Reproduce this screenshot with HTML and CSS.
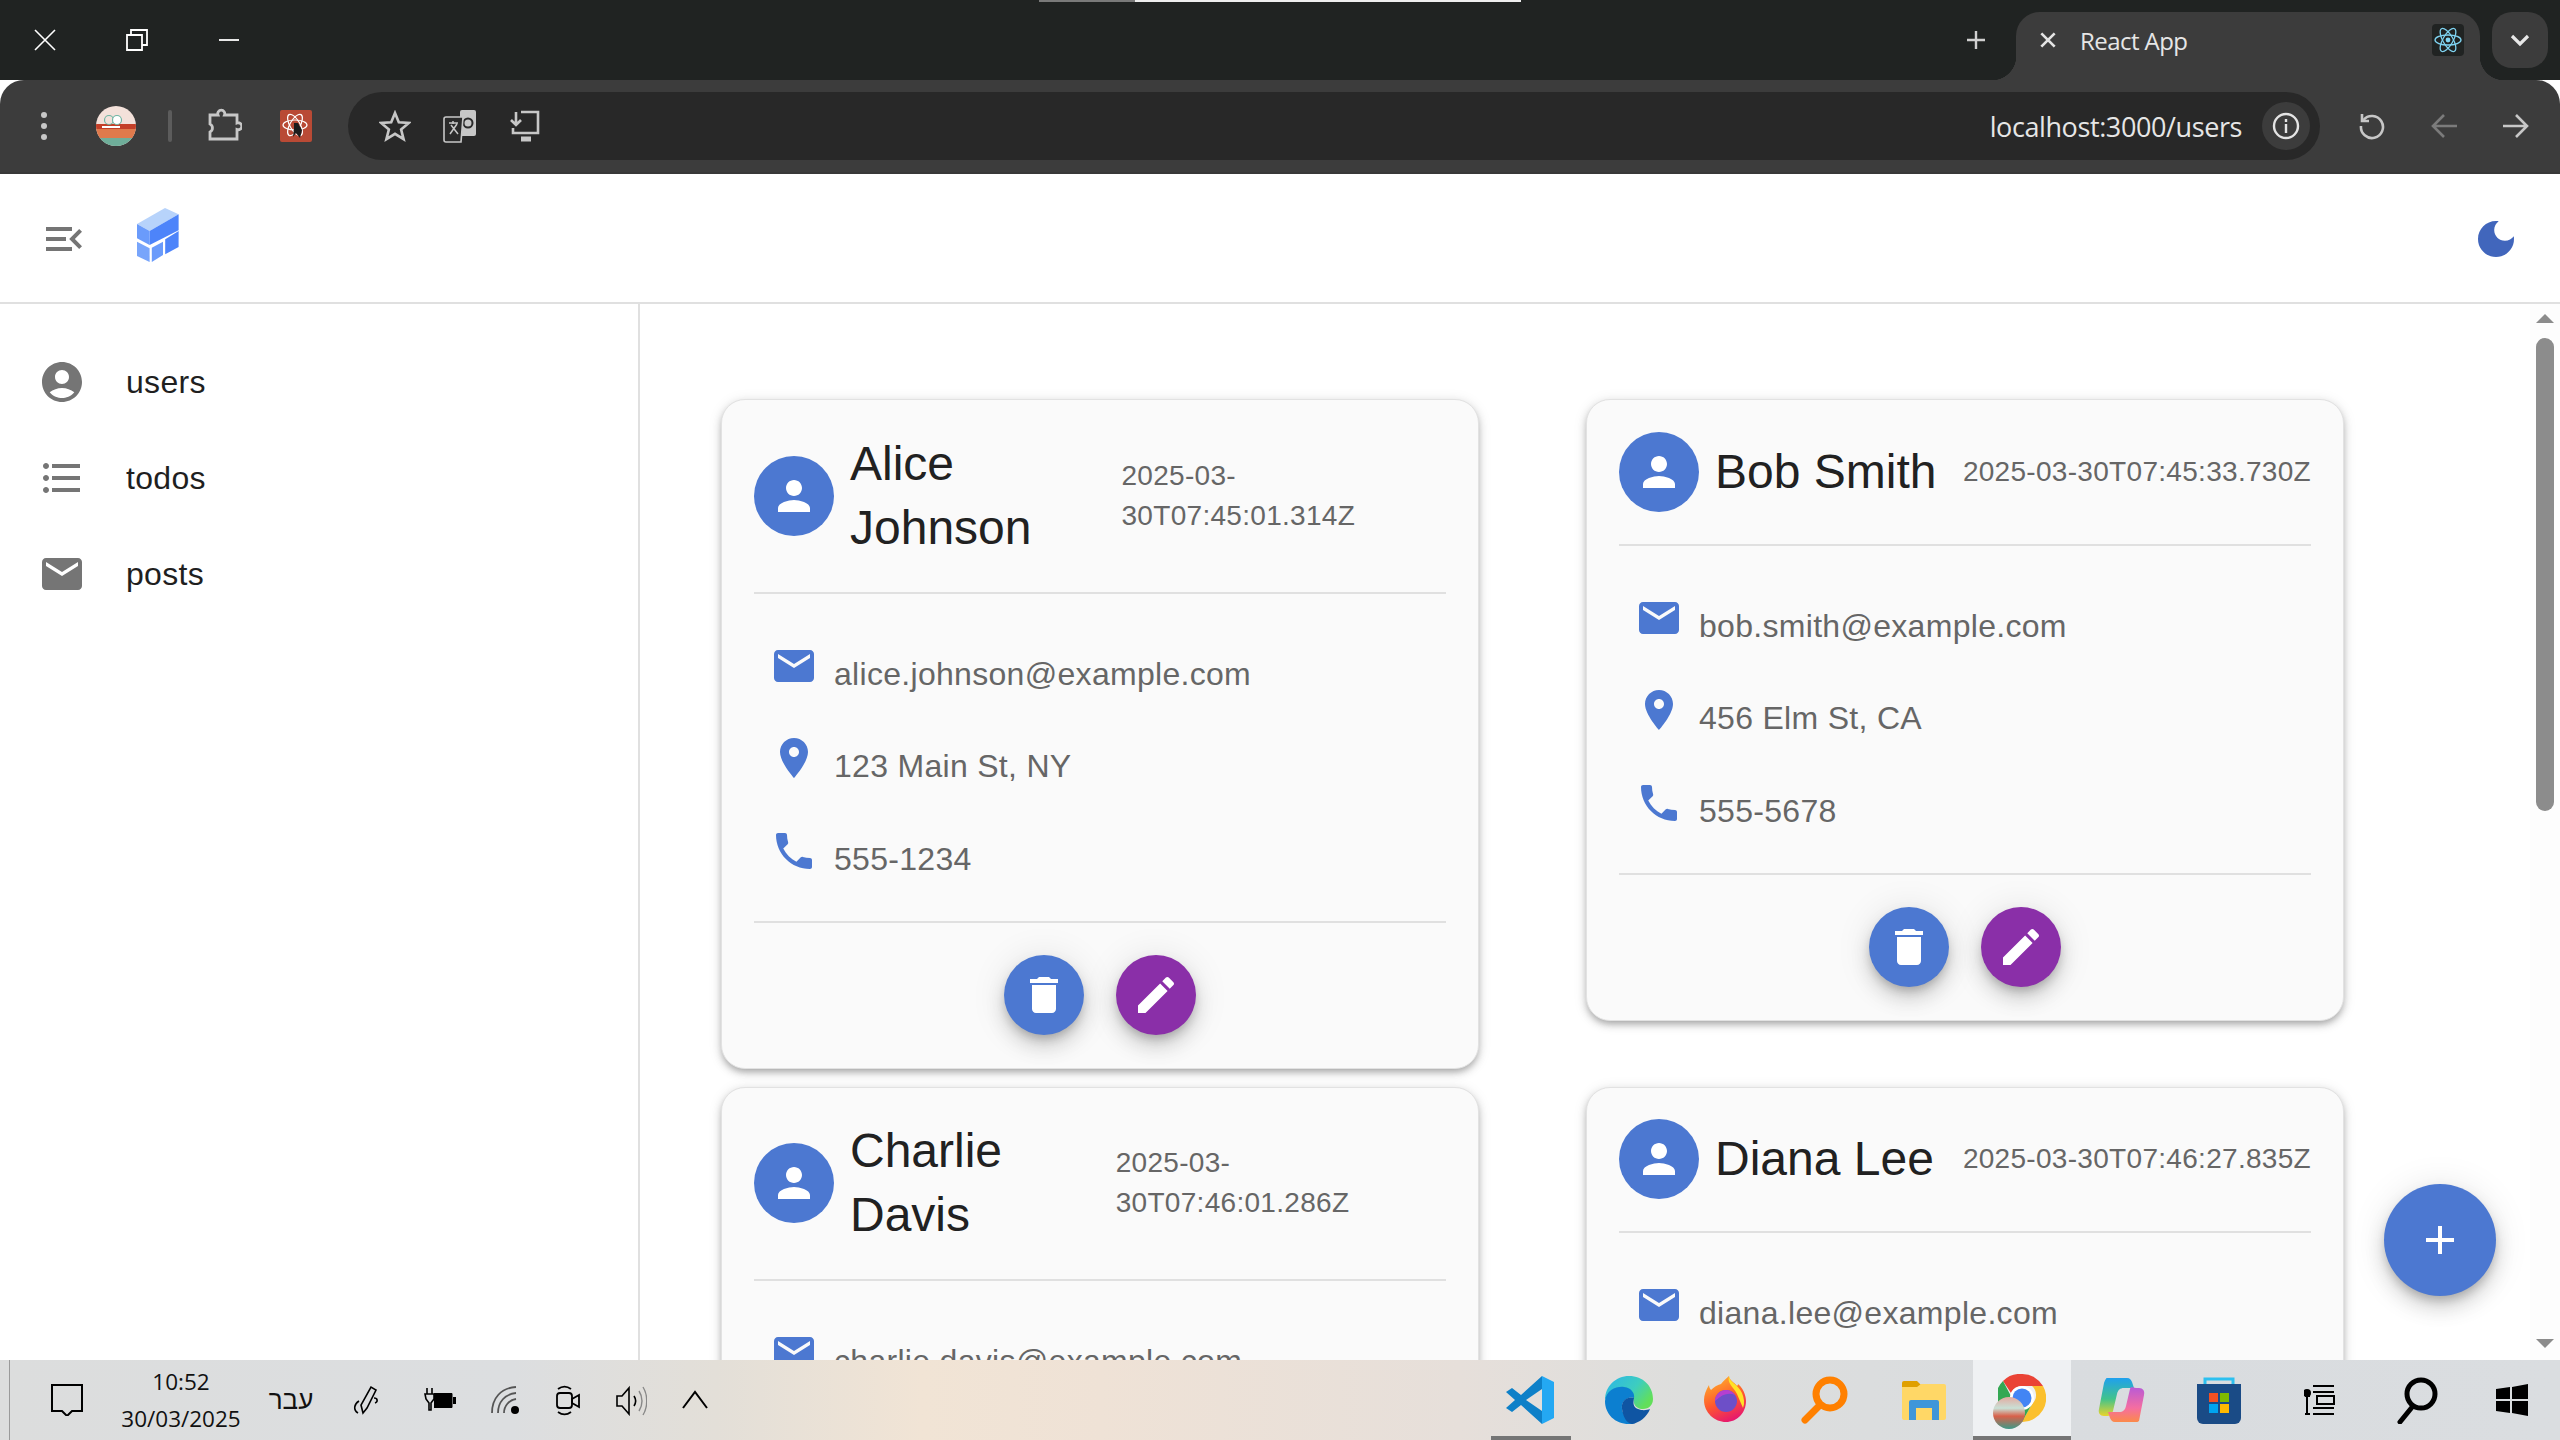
FILE: index.html
```html
<!DOCTYPE html>
<html lang="en">
<head>
    <meta charset="UTF-8">
    <title>React App</title>
    <link rel="stylesheet" href="styles.css">
</head>
<body>
    <svg class="defs" xmlns="http://www.w3.org/2000/svg">
        <symbol id="i-person" viewBox="0 0 24 24"><path d="M12 12c2.21 0 4-1.79 4-4s-1.79-4-4-4-4 1.79-4 4 1.79 4 4 4zm0 2c-2.67 0-8 1.34-8 4v2h16v-2c0-2.66-5.33-4-8-4z"/></symbol>
        <symbol id="i-email" viewBox="0 0 24 24"><path d="M20 4H4c-1.1 0-1.99.9-1.99 2L2 18c0 1.1.9 2 2 2h16c1.1 0 2-.9 2-2V6c0-1.1-.9-2-2-2zm0 4l-8 5-8-5V6l8 5 8-5v2z"/></symbol>
        <symbol id="i-pin" viewBox="0 0 24 24"><path d="M12 2C8.13 2 5 5.13 5 9c0 5.25 7 13 7 13s7-7.75 7-13c0-3.87-3.13-7-7-7zm0 9.5c-1.38 0-2.5-1.12-2.5-2.5s1.12-2.5 2.5-2.5 2.5 1.12 2.5 2.5-1.12 2.5-2.5 2.5z"/></symbol>
        <symbol id="i-phone" viewBox="0 0 24 24"><path d="M6.62 10.79c1.44 2.83 3.76 5.14 6.59 6.59l2.2-2.2c.27-.27.67-.36 1.02-.24 1.12.37 2.33.57 3.57.57.55 0 1 .45 1 1V20c0 .55-.45 1-1 1-9.39 0-17-7.61-17-17 0-.55.45-1 1-1h3.5c.55 0 1 .45 1 1 0 1.25.2 2.45.57 3.57.11.35.03.74-.25 1.02l-2.2 2.2z"/></symbol>
        <symbol id="i-delete" viewBox="0 0 24 24"><path d="M6 19c0 1.1.9 2 2 2h8c1.1 0 2-.9 2-2V7H6v12zM19 4h-3.5l-1-1h-5l-1 1H5v2h14V4z"/></symbol>
        <symbol id="i-edit" viewBox="0 0 24 24"><path d="M3 17.25V21h3.75L17.81 9.94l-3.75-3.75L3 17.25zM20.71 7.04c.39-.39.39-1.02 0-1.41l-2.34-2.34c-.39-.39-1.02-.39-1.41 0l-1.83 1.83 3.75 3.75 1.83-1.83z"/></symbol>
    </svg>

    <!-- browser tabs -->
    <div class="tabstrip">
        <div class="winbtn">
            <svg viewBox="0 0 24 24" class="win-ic"><path d="M2 2l20 20M22 2L2 22" stroke="#fff" stroke-width="1.6" fill="none"/></svg>
        </div>
        <div class="winbtn">
            <svg viewBox="0 0 24 24" class="win-ic"><path d="M2 7h15v15H2zM6 7V2h16v15h-5" stroke="#fff" stroke-width="1.8" fill="none"/></svg>
        </div>
        <div class="winbtn">
            <svg viewBox="0 0 24 24" class="win-ic"><path d="M2 12h20" stroke="#fff" stroke-width="1.8" fill="none"/></svg>
        </div>
        <div class="progress"><span class="progress-old"></span><span class="progress-new"></span></div>
        <div class="newtab">
            <svg viewBox="0 0 24 24" class="tab-ic"><path d="M12 3v18M3 12h18" stroke="#d0d0d0" stroke-width="2.4" fill="none"/></svg>
        </div>
        <div class="tab">
            <svg viewBox="0 0 24 24" class="tab-close"><path d="M4 4l16 16M20 4L4 20" stroke="#e4e4e4" stroke-width="3.2" fill="none"/></svg>
            <span class="tab-title">React App</span>
            <span class="favicon">
                <svg viewBox="0 0 32 32" width="32" height="32" fill="none" stroke="#7fd4f2" stroke-width="1.3">
                    <ellipse cx="16" cy="16" rx="13" ry="5"/>
                    <ellipse cx="16" cy="16" rx="13" ry="5" transform="rotate(60 16 16)"/>
                    <ellipse cx="16" cy="16" rx="13" ry="5" transform="rotate(120 16 16)"/>
                    <circle cx="16" cy="16" r="2.4" fill="#7fd4f2" stroke="none"/>
                </svg>
            </span>
        </div>
        <div class="tabmenu">
            <svg viewBox="0 0 24 24" class="tab-ic"><path d="M4 8l8 8 8-8" stroke="#e8e8e8" stroke-width="3.2" fill="none"/></svg>
        </div>
    </div>

    <!-- browser toolbar -->
    <div class="toolbar">
        <div class="tool">
            <svg viewBox="0 0 48 48" class="tool-ic"><circle cx="24" cy="13" r="3" fill="#c7c7c7"/><circle cx="24" cy="24" r="3" fill="#c7c7c7"/><circle cx="24" cy="35" r="3" fill="#c7c7c7"/></svg>
        </div>
        <div class="tool">
            <svg viewBox="0 0 40 40" width="40" height="40">
                <clipPath id="profile"><circle cx="20" cy="20" r="20"/></clipPath>
                <g clip-path="url(#profile)">
                    <rect width="40" height="40" fill="#f3e1da"/>
                    <rect y="18" width="40" height="5" fill="#c43f28"/>
                    <rect y="23" width="40" height="9" fill="#df7a4c"/>
                    <rect y="32" width="40" height="8" fill="#6fae9a"/>
                    <rect x="6" y="20" width="18" height="2" fill="#fff"/>
                    <circle cx="13" cy="14" r="4.5" fill="none" stroke="#6fb5a4" stroke-width="1.2"/>
                    <circle cx="21" cy="14" r="4.5" fill="#fff" stroke="#6fb5a4" stroke-width="1.2"/>
                </g>
            </svg>
        </div>
        <span class="tool-sep"></span>
        <div class="tool">
            <svg viewBox="0 0 36 36" width="36" height="36" fill="none" stroke="#c7c7c7" stroke-width="2.8"><path d="M4 7h8a3.5 3.5 0 1 1 6.5 0H31v8a3.5 3.5 0 1 1 0 6.5V31H4v-7a4.5 4.5 0 0 0 0-8z"/></svg>
        </div>
        <div class="tool">
            <svg viewBox="0 0 32 32" width="32" height="32">
                <rect width="32" height="32" rx="2" fill="#b94a35"/>
                <g fill="none" stroke="#fff" stroke-width="1.2">
                    <ellipse cx="15" cy="15" rx="12" ry="5"/>
                    <ellipse cx="15" cy="15" rx="12" ry="5" transform="rotate(60 15 15)"/>
                    <ellipse cx="15" cy="15" rx="12" ry="5" transform="rotate(120 15 15)"/>
                </g>
                <path d="M14 13h4l4 7-2 8-4-5-3 4 1-8z" fill="#1c1c1c"/>
            </svg>
        </div>
        <div class="omnibox">
            <div class="omni-actions">
                <div class="tool">
                    <svg viewBox="0 0 32 32" width="32" height="32"><path d="M16 3l3.8 9.3 10 .7-7.7 6.4 2.5 9.7L16 23.8l-8.6 5.3 2.5-9.7L2.2 13l10-.7z" fill="none" stroke="#c7c7c7" stroke-width="2.6"/></svg>
                </div>
                <div class="tool">
                    <svg viewBox="0 0 34 34" width="34" height="34">
                        <path d="M17 8V3a2 2 0 0 1 2-2h12a2 2 0 0 1 2 2v22a2 2 0 0 1-2 2H17z" fill="#c7c7c7"/>
                        <circle cx="25" cy="14" r="4.5" fill="none" stroke="#2a2a2a" stroke-width="2"/>
                        <path d="M3 8h17l-2 25H3a2 2 0 0 1-2-2V10a2 2 0 0 1 2-2z" fill="#2a2a2a" stroke="#c7c7c7" stroke-width="1.6"/>
                        <path d="M6 14h9M10 12v3M14 15l-7 10M8 16l7 9" fill="none" stroke="#c7c7c7" stroke-width="1.5"/>
                    </svg>
                </div>
                <div class="tool">
                    <svg viewBox="0 0 32 32" width="32" height="32" fill="none" stroke="#c7c7c7" stroke-width="2.6"><path d="M12 2h17v21H4v-5"/><path d="M7 2v13M2 10l5 5 5-5"/><path d="M12 29h10" stroke-width="5"/></svg>
                </div>
            </div>
            <span class="url">localhost:3000/users</span>
            <div class="site-info">
                <svg viewBox="0 0 28 28" width="28" height="28" fill="none" stroke="#e4e4e4" stroke-width="2.4"><circle cx="14" cy="14" r="12"/><path d="M14 12v9M14 7v3"/></svg>
            </div>
        </div>
        <div class="nav-tools">
            <div class="tool">
                <svg viewBox="0 0 28 28" width="28" height="28" fill="none" stroke="#c7c7c7" stroke-width="2.6"><path d="M5.5 8A11 11 0 1 1 3 14"/><path d="M4 2v7h7"/></svg>
            </div>
            <div class="tool">
                <svg viewBox="0 0 28 28" width="28" height="28" fill="none" stroke="#7b7b7b" stroke-width="2.6"><path d="M27 14H3M14 3L3 14l11 11"/></svg>
            </div>
            <div class="tool">
                <svg viewBox="0 0 28 28" width="28" height="28" fill="none" stroke="#c7c7c7" stroke-width="2.6"><path d="M1 14h24M14 3l11 11-11 11"/></svg>
            </div>
        </div>
    </div>

    <!-- app bar -->
    <header class="appbar">
        <svg viewBox="0 0 24 24" class="icon menu-ic"><path d="M3 18h13v-2H3v2zm0-5h10v-2H3v2zm0-7v2h13V6H3zm18 9.59L17.42 12 21 8.41 19.59 7l-5 5 5 5L21 15.59z"/></svg>
        <svg viewBox="0 0 42 54" class="logo">
            <path d="M0 16L28 0l13.6 6.3L12.6 23z" fill="#b7d3fb"/>
            <path d="M0 16l12.6 7v14L0 30.3z" fill="#6a9bfb"/>
            <path d="M12.6 23l29-16.7v16L12.6 37z" fill="#4d84fa"/>
            <path d="M0 33.7l12.6 6.6V54L0 48z" fill="#78a5fb"/>
            <path d="M14.8 39.7L26 33.7V47l-11.2 7z" fill="#6a9bfb"/>
            <path d="M28.2 31.3L41.6 23v16l-13.4 7.3z" fill="#4d84fa"/>
        </svg>
        <svg viewBox="0 0 24 24" class="icon moon-ic"><path d="M12 3c-4.97 0-9 4.03-9 9s4.03 9 9 9 9-4.03 9-9c0-.46-.04-.92-.1-1.36-.98 1.37-2.58 2.26-4.4 2.26-2.98 0-5.4-2.42-5.4-5.4 0-1.81.89-3.42 2.26-4.4-.44-.06-.9-.1-1.36-.1z"/></svg>
    </header>

    <div class="page">
        <nav class="sidebar">
            <a class="nav-item">
                <svg viewBox="0 0 24 24" class="icon"><path d="M12 2C6.48 2 2 6.48 2 12s4.48 10 10 10 10-4.48 10-10S17.52 2 12 2zm0 4c1.93 0 3.5 1.57 3.5 3.5S13.93 13 12 13s-3.5-1.57-3.5-3.5S10.07 6 12 6zm0 14c-2.03 0-4.43-.82-6.14-2.88C7.55 15.8 9.68 15 12 15s4.45.8 6.14 2.12C16.43 19.18 14.03 20 12 20z"/></svg>
                <span>users</span>
            </a>
            <a class="nav-item">
                <svg viewBox="0 0 24 24" class="icon"><path d="M4 10.5c-.83 0-1.5.67-1.5 1.5s.67 1.5 1.5 1.5 1.5-.67 1.5-1.5-.67-1.5-1.5-1.5zm0-6c-.83 0-1.5.67-1.5 1.5S3.17 7.5 4 7.5 5.5 6.83 5.5 6 4.83 4.5 4 4.5zm0 12c-.83 0-1.5.68-1.5 1.5s.68 1.5 1.5 1.5 1.5-.68 1.5-1.5-.67-1.5-1.5-1.5zM7 19h14v-2H7v2zm0-6h14v-2H7v2zm0-8v2h14V5H7z"/></svg>
                <span>todos</span>
            </a>
            <a class="nav-item">
                <svg class="icon"><use href="#i-email"/></svg>
                <span>posts</span>
            </a>
        </nav>

        <main class="content">
            <div class="cards">
                <article class="card">
                    <div class="card-head">
                        <span class="avatar"><svg class="icon"><use href="#i-person"/></svg></span>
                        <h2 class="name">Alice Johnson</h2>
                        <span class="date">2025-03-30T07:45:01.314Z</span>
                    </div>
                    <ul class="info">
                        <li><svg class="icon"><use href="#i-email"/></svg><span>alice.johnson@example.com</span></li>
                        <li><svg class="icon"><use href="#i-pin"/></svg><span>123 Main St, NY</span></li>
                        <li><svg class="icon"><use href="#i-phone"/></svg><span>555-1234</span></li>
                    </ul>
                    <div class="card-actions">
                        <button class="round blue"><svg class="icon"><use href="#i-delete"/></svg></button>
                        <button class="round purple"><svg class="icon"><use href="#i-edit"/></svg></button>
                    </div>
                </article>

                <article class="card">
                    <div class="card-head">
                        <span class="avatar"><svg class="icon"><use href="#i-person"/></svg></span>
                        <h2 class="name">Bob Smith</h2>
                        <span class="date">2025-03-30T07:45:33.730Z</span>
                    </div>
                    <ul class="info">
                        <li><svg class="icon"><use href="#i-email"/></svg><span>bob.smith@example.com</span></li>
                        <li><svg class="icon"><use href="#i-pin"/></svg><span>456 Elm St, CA</span></li>
                        <li><svg class="icon"><use href="#i-phone"/></svg><span>555-5678</span></li>
                    </ul>
                    <div class="card-actions">
                        <button class="round blue"><svg class="icon"><use href="#i-delete"/></svg></button>
                        <button class="round purple"><svg class="icon"><use href="#i-edit"/></svg></button>
                    </div>
                </article>

                <article class="card">
                    <div class="card-head">
                        <span class="avatar"><svg class="icon"><use href="#i-person"/></svg></span>
                        <h2 class="name">Charlie Davis</h2>
                        <span class="date">2025-03-30T07:46:01.286Z</span>
                    </div>
                    <ul class="info">
                        <li><svg class="icon"><use href="#i-email"/></svg><span>charlie.davis@example.com</span></li>
                    </ul>
                </article>

                <article class="card">
                    <div class="card-head">
                        <span class="avatar"><svg class="icon"><use href="#i-person"/></svg></span>
                        <h2 class="name">Diana Lee</h2>
                        <span class="date">2025-03-30T07:46:27.835Z</span>
                    </div>
                    <ul class="info">
                        <li><svg class="icon"><use href="#i-email"/></svg><span>diana.lee@example.com</span></li>
                    </ul>
                </article>
            </div>

            <button class="fab">
                <svg viewBox="0 0 24 24" class="icon"><path d="M19 13h-6v6h-2v-6H5v-2h6V5h2v6h6v2z"/></svg>
            </button>
        </main>

        <div class="scrollbar">
            <span class="arrow-up"></span>
            <span class="thumb"></span>
            <span class="arrow-down"></span>
        </div>
    </div>

    <!-- windows taskbar -->
    <footer class="taskbar">
        <div class="tray">
            <svg viewBox="0 0 32 32" class="tray-ic big"><path d="M1 1h30v26H21l-5 5-5-5H1z" fill="none" stroke="#000" stroke-width="2"/></svg>
            <div class="clock"><span>10:52</span><span>30/03/2025</span></div>
            <span class="lang" lang="he">עבר</span>
            <svg viewBox="0 0 32 32" class="tray-ic"><path d="M12 29l-2-8L20 3l5 3-9 18zM23 14c4 0 4 4 1 5M8 17c-5 3-6 9-1 12" fill="none" stroke="#000" stroke-width="1.6"/></svg>
            <svg viewBox="0 0 32 32" class="tray-ic"><path d="M3 4v6M8 4v6M1 10h9v5l-3 4v7H5v-7l-3-4z" fill="none" stroke="#000" stroke-width="1.6"/><rect x="10" y="9" width="18" height="15" fill="#000"/><rect x="21" y="10" width="7" height="13" fill="none" stroke="#000"/><rect x="29" y="13" width="3" height="7"/></svg>
            <svg viewBox="0 0 32 32" class="tray-ic"><path d="M3 29C3 14 12 4 27 3M9 29C9 18 16 10 27 9M15 29c0-7 5-13 12-14" fill="none" stroke="#555" stroke-width="1.8"/><circle cx="26" cy="26" r="4"/></svg>
            <svg viewBox="0 0 32 32" class="tray-ic"><rect x="6" y="9" width="15" height="15" rx="3" fill="none" stroke="#000" stroke-width="1.8"/><path d="M21 15l7-4v12l-7-4zM7 5c4-3 9-3 13 0M7 28c4 3 9 3 13 0" fill="none" stroke="#000" stroke-width="1.8"/></svg>
            <svg viewBox="0 0 32 32" class="tray-ic"><path d="M2 12h5l7-8v26l-7-8H2z" fill="none" stroke="#000" stroke-width="1.6"/><path d="M19 12c2 3 2 7 0 10" fill="none" stroke="#000" stroke-width="1.6"/><path d="M24 7c4 6 4 14 0 20M28 3c5 8 5 20 0 28" fill="none" stroke="#888" stroke-width="1.4"/></svg>
            <svg viewBox="0 0 32 32" class="tray-ic"><path d="M4 24L16 8l12 16" fill="none" stroke="#000" stroke-width="2"/></svg>
        </div>

        <div class="apps">
            <div class="app active-soft">
                <svg viewBox="0 0 48 48" class="app-ic">
                    <path d="M36 0L15 19 6 12l-6 4 9 8-9 8 6 4 9-7 21 19V35L20 24 36 13z" fill="#0e80c8"/>
                    <path d="M36 0l12 6v36l-12 6z" fill="#24a8f3"/>
                </svg>
            </div>
            <div class="app">
                <svg viewBox="0 0 48 48" class="app-ic">
                    <defs><linearGradient id="edge" x1="0" y1="0" x2="1" y2="0.6"><stop offset="0" stop-color="#2bb5e8"/><stop offset=".6" stop-color="#3dcdc0"/><stop offset="1" stop-color="#62df5a"/></linearGradient></defs>
                    <path d="M0 24C0 10 11 0 24 0c14 0 24 10 24 23 0 6-4 10-10 10-4 0-8-2-9-6-1-4 0-6-2-9-4-5-12-5-17-2C5 18 1 21 0 24z" fill="url(#edge)"/>
                    <path d="M0 25C1 14 12 10 19 11c8 1 11 7 10 11-7-2-13 4-12 11 1 8 9 13 13 14-2 1-4 1-6 1C10 48 0 38 0 25z" fill="#0c7fd0"/>
                    <path d="M17 33c-1-7 4-13 12-11-1 5-1 9 4 11 5 2 9 1 12 0-3 8-11 14-18 15-6-1-9-8-10-15z" fill="#0f55a3"/>
                </svg>
            </div>
            <div class="app">
                <svg viewBox="0 0 48 48" class="app-ic">
                    <defs><linearGradient id="fox" x1="0.2" y1="0" x2="0.6" y2="1"><stop offset="0" stop-color="#ffb52b"/><stop offset=".55" stop-color="#ff5a2c"/><stop offset="1" stop-color="#e6176f"/></linearGradient></defs>
                    <path d="M26 0c0 4 5 6 8 10 1-1 1-2 1-2 7 6 8 14 8 17 0 12-9 21-20 21S1 37 1 24C1 19 3 14 6 9c0 2 1 4 2 5 3-3 6-5 10-6 2-3 5-5 8-8z" fill="url(#fox)"/>
                    <path d="M26 0c0 6 9 8 13 17 2 5 3 10 1 15l-6-14C30 10 24 8 26 0z" fill="#ffe226"/>
                    <circle cx="23" cy="25" r="11" fill="#6d4fc8"/>
                    <path d="M12 25c0-6 5-11 11-11 4 0 7 2 9 5-6-3-13-1-20 6z" fill="#b43fd0"/>
                </svg>
            </div>
            <div class="app">
                <svg viewBox="0 0 48 48" class="app-ic">
                    <circle cx="29" cy="18" r="14" fill="none" stroke="#ff8000" stroke-width="7"/>
                    <path d="M19 29L4 44" stroke="#ff8000" stroke-width="7" stroke-linecap="round"/>
                </svg>
            </div>
            <div class="app">
                <svg viewBox="0 0 48 48" class="app-ic">
                    <path d="M2 7a2 2 0 0 1 2-2h13l4 4-4 4H2z" fill="#e0a000"/>
                    <path d="M2 11h15l4-3h23a2 2 0 0 1 2 2v32a2 2 0 0 1-2 2H4a2 2 0 0 1-2-2z" fill="#ffd766"/>
                    <path d="M9 44V26a2 2 0 0 1 2-2h26a2 2 0 0 1 2 2v18h-7V32H16v12z" fill="#3f96d9"/>
                </svg>
            </div>
            <div class="app active">
                <svg viewBox="0 0 48 48" class="app-ic">
                    <path d="M24 0a24 24 0 0 1 21 12H24a12 12 0 0 0-11 7L5 7A24 24 0 0 1 24 0z" fill="#ea4335"/>
                    <path d="M45 12a24 24 0 0 1-21 36l10-18a12 12 0 0 0 0-18z" fill="#fbc02d"/>
                    <path d="M5 7l9 17a12 12 0 0 0 20 6l-10 18A24 24 0 0 1 5 7z" fill="#34a853"/>
                    <circle cx="24" cy="24" r="12" fill="#fff"/>
                    <circle cx="24" cy="24" r="9.5" fill="#4285f4"/>
                </svg>
                <span class="chrome-profile"></span>
            </div>
            <div class="app">
                <svg viewBox="0 0 48 48" class="app-ic">
                    <defs>
                        <linearGradient id="cop1" x1="0" y1="0" x2="0" y2="1"><stop offset="0" stop-color="#1fa0ee"/><stop offset=".55" stop-color="#41c38c"/><stop offset="1" stop-color="#e9d42c"/></linearGradient>
                        <linearGradient id="cop2" x1="0.5" y1="0" x2="0.5" y2="1"><stop offset="0" stop-color="#b95ad6"/><stop offset=".6" stop-color="#f56ea0"/><stop offset="1" stop-color="#fb8a4a"/></linearGradient>
                    </defs>
                    <path d="M10 2h20c3 0 4 2 5 4l2 6H27c-4 0-6 2-7 6l-4 17c-1 3-3 5-6 5H7c-4 0-6-3-5-7l5-26c1-3 2-5 3-5z" fill="url(#cop1)"/>
                    <path d="M38 46H18c-3 0-4-2-5-4l-2-6h11c4 0 6-2 7-6l4-17c1-3 3-1 6-1h3c4 0 6 3 5 7l-5 26c-1 1-2 1-4 1z" fill="url(#cop2)"/>
                </svg>
            </div>
            <div class="app">
                <svg viewBox="0 0 48 48" class="app-ic">
                    <path d="M10 10V3h28v7" fill="none" stroke="#2cc0f0" stroke-width="3"/>
                    <path d="M2 8h44v34a6 6 0 0 1-6 6H8a6 6 0 0 1-6-6z" fill="#1a4b86"/>
                    <rect x="14" y="17" width="9" height="9" fill="#f25022"/>
                    <rect x="25" y="17" width="9" height="9" fill="#7fba00"/>
                    <rect x="14" y="28" width="9" height="9" fill="#00a4ef"/>
                    <rect x="25" y="28" width="9" height="9" fill="#ffb900"/>
                </svg>
            </div>
        </div>

        <div class="sys-apps">
            <div class="app">
                <svg viewBox="0 0 32 32" width="32" height="32" fill="none" stroke="#000" stroke-width="2"><path d="M9 2h21M9 8h21M9 24h21M9 30h21M13 12h17v8H13zM1 12h5M3 12v18M1 30h5"/><circle cx="3" cy="9" r="3" fill="#000"/></svg>
            </div>
            <div class="app">
                <svg viewBox="0 0 48 48" class="app-ic">
                    <circle cx="29" cy="18" r="14" fill="none" stroke="#000" stroke-width="5"/>
                    <path d="M21 30L8 46" stroke="#000" stroke-width="5" stroke-linecap="round"/>
                </svg>
            </div>
            <div class="app">
                <svg viewBox="0 0 32 32" width="32" height="32"><path d="M0 5l14-2v12H0zM16 3l16-3v15H16zM0 17h14v12L0 27zM16 17h16v15l-16-3z"/></svg>
            </div>
        </div>
    </footer>
</body>
</html>
```

FILE: styles.css
```css
* {
    box-sizing: border-box;
}
html, body {
    margin: 0;
    padding: 0;
}
body {
    width: 2560px;
    height: 1440px;
    overflow: hidden;
    display: flex;
    flex-direction: column;
    background-color: #fff;
    font-family: "Liberation Sans", Arial, sans-serif;
}
.defs {
    display: none;
}
.icon {
    width: 48px;
    height: 48px;
    flex: none;
    fill: currentColor;
}

/* browser tabs */
.tabstrip {
    position: relative;
    flex: none;
    height: 80px;
    display: flex;
    padding-right: 12px;
    background-color: #202322;
}
.winbtn {
    width: 92px;
    height: 80px;
    display: flex;
    align-items: center;
    justify-content: center;
}
.winbtn:first-child {
    margin-left: -1px;
}
.win-ic {
    width: 24px;
    height: 24px;
}
.progress {
    position: absolute;
    top: 0;
    left: 1039px;
    display: flex;
    height: 2px;
}
.progress-old {
    width: 96px;
    background-color: #7a7a7a;
}
.progress-new {
    width: 386px;
    background-color: #eee;
}
.newtab {
    margin-left: auto;
    width: 56px;
    height: 80px;
    margin-right: 12px;
    display: flex;
    align-items: center;
    justify-content: center;
}
.tab-ic {
    width: 24px;
    height: 24px;
}
.tab {
    position: relative;
    width: 464px;
    height: 68px;
    margin-top: 12px;
    padding: 0 16px 12px 22px;
    display: flex;
    align-items: center;
    border-radius: 24px 24px 0 0;
    background-color: #3c3c3c;
}
.tab::before,
.tab::after {
    content: "";
    position: absolute;
    bottom: 0;
    width: 24px;
    height: 24px;
}
.tab::before {
    left: -24px;
    background: radial-gradient(circle at 0 0, transparent 24px, #3c3c3c 24.5px);
}
.tab::after {
    right: -24px;
    background: radial-gradient(circle at 100% 0, transparent 24px, #3c3c3c 24.5px);
}
.tab-close {
    width: 20px;
    height: 20px;
    flex: none;
}
.tab-title {
    margin-left: 22px;
    color: #e6e6e6;
    font: 24px "Open Sans", sans-serif;
    letter-spacing: -0.55px;
}
.favicon {
    margin-left: auto;
    width: 32px;
    height: 32px;
    border-radius: 4px;
    background-color: #202322;
}
.tabmenu {
    width: 56px;
    height: 56px;
    margin: 12px 0 0 12px;
    display: flex;
    align-items: center;
    justify-content: center;
    border-radius: 20px;
    background-color: #3c3c3c;
}

/* browser toolbar */
.toolbar {
    position: relative;
    flex: none;
    height: 94px;
    padding: 0 20px;
    display: flex;
    align-items: center;
    gap: 24px;
    border-radius: 24px 24px 0 0;
    border-bottom: 2px solid #383838;
    background-color: #3c3c3c;
}
.tool {
    width: 48px;
    height: 48px;
    flex: none;
    display: flex;
    align-items: center;
    justify-content: center;
}
.tool-ic {
    width: 48px;
    height: 48px;
}
.tool-sep {
    width: 4px;
    height: 32px;
    margin: 0 4px;
    border-radius: 2px;
    background-color: #5c5c5c;
}
.omnibox {
    width: 1972px;
    height: 68px;
    margin-left: 4px;
    padding: 0 10px 0 23px;
    display: flex;
    align-items: center;
    border-radius: 34px;
    background-color: #282828;
}
.omni-actions {
    display: flex;
    gap: 17px;
}
.url {
    margin-left: auto;
    color: #e6e6e6;
    font: 27px "Open Sans", sans-serif;
    letter-spacing: -0.4px;
}
.site-info {
    width: 48px;
    height: 48px;
    margin-left: 20px;
    display: flex;
    align-items: center;
    justify-content: center;
    border-radius: 50%;
    background-color: #3c3c3c;
}
.nav-tools {
    margin-left: 4px;
    display: flex;
    gap: 24px;
}

/* app bar */
.appbar {
    flex: none;
    height: 130px;
    padding: 1px 40px 0;
    display: flex;
    align-items: center;
    border-bottom: 2px solid #e0e0e0;
}
.menu-ic {
    color: #757575;
}
.logo {
    width: 42px;
    height: 54px;
    margin: 0 0 8px 49px;
}
.moon-ic {
    margin-left: auto;
    color: #4166bc;
}

/* page */
.page {
    flex: 1;
    min-height: 0;
    display: flex;
}
.sidebar {
    flex: none;
    width: 640px;
    padding-top: 30px;
    border-right: 2px solid #e0e0e0;
}
.nav-item {
    height: 96px;
    padding-left: 38px;
    display: flex;
    align-items: center;
    gap: 40px;
    color: #1f1f1f;
    font-size: 32px;
    letter-spacing: 0.3px;
}
.nav-item .icon {
    color: #757575;
}
.content {
    position: relative;
    flex: 1;
    min-width: 0;
    overflow: hidden;
}
.cards {
    padding: 95px 0 0 81px;
    display: grid;
    grid-template-columns: 758px 758px;
    column-gap: 107px;
    row-gap: 18px;
    align-items: start;
}
.card {
    padding: 31.5px 32px 33px;
    border: 1px solid #e2e2e2;
    border-radius: 24px;
    background-color: #fafafa;
    box-shadow: 0 4px 6px -2px rgba(0, 0, 0, 0.2), 0 4px 8px rgba(0, 0, 0, 0.14), 0 2px 14px rgba(0, 0, 0, 0.1);
}
.card-head {
    padding-bottom: 32px;
    display: flex;
    align-items: center;
    justify-content: space-between;
    border-bottom: 2px solid #e0e0e0;
}
.avatar {
    flex: none;
    width: 80px;
    height: 80px;
    margin-right: 16px;
    display: flex;
    align-items: center;
    justify-content: center;
    border-radius: 50%;
    color: #fff;
    background-color: #4c78d1;
}
.name {
    margin: 0 auto 0 0;
    flex: 0 1.35 auto;
    color: #212121;
    font-size: 48px;
    font-weight: 400;
    line-height: 64px;
}
.date {
    flex: 0 1 auto;
    color: #666;
    font-size: 28px;
    line-height: 40px;
    letter-spacing: 0.3px;
}
.info {
    margin: 0;
    padding: 30px 0 20px;
    list-style: none;
    border-bottom: 2px solid #e0e0e0;
}
.info li {
    height: 92.5px;
    padding: 18px 0 0 16px;
    display: flex;
    align-items: flex-start;
    gap: 16px;
    color: #666;
    font-size: 32px;
    line-height: 48px;
    letter-spacing: 0.3px;
}
.info .icon {
    color: #4c78d1;
}
.info span {
    margin-top: 8px;
}
.card-actions {
    padding-top: 31.5px;
    display: flex;
    justify-content: center;
    gap: 32px;
}
.round {
    width: 80px;
    height: 80px;
    padding: 0;
    display: flex;
    align-items: center;
    justify-content: center;
    border: none;
    border-radius: 50%;
    color: #fff;
    box-shadow: 0 6px 10px -2px rgba(0, 0, 0, 0.2), 0 12px 20px rgba(0, 0, 0, 0.14), 0 2px 36px rgba(0, 0, 0, 0.1);
}
.blue {
    background-color: #4c78d1;
}
.purple {
    background-color: #8a2fa8;
}
.fab {
    position: absolute;
    right: 34px;
    bottom: 64px;
    width: 112px;
    height: 112px;
    padding: 0;
    display: flex;
    align-items: center;
    justify-content: center;
    border: none;
    border-radius: 50%;
    color: #fff;
    background-color: #4c78d1;
    box-shadow: 0 6px 10px -2px rgba(0, 0, 0, 0.2), 0 12px 20px rgba(0, 0, 0, 0.14), 0 2px 36px rgba(0, 0, 0, 0.1);
}
.scrollbar {
    flex: none;
    width: 30px;
    padding: 10px 6px 12px;
    display: flex;
    flex-direction: column;
    align-items: center;
    background-color: #fdfdfd;
}
.arrow-up {
    border: 9px solid transparent;
    border-top: none;
    border-bottom-color: #8c8c8c;
}
.arrow-down {
    margin-top: auto;
    border: 9px solid transparent;
    border-bottom: none;
    border-top-color: #8c8c8c;
}
.thumb {
    width: 18px;
    height: 473px;
    margin-top: 15px;
    border-radius: 9px;
    background-color: #8c8c8c;
}

/* windows taskbar */
.taskbar {
    flex: none;
    height: 80px;
    display: flex;
    background: linear-gradient(90deg, #dcdddd 0, #dcdee0 20%, #e3dfd8 28%, #f1e4d5 36%, #efe2d6 43%, #e6dfda 57%, #dddedd 66%, #d9dcdf 80%, #dadde0 100%);
}
.tray {
    width: 1472px;
    flex: none;
    display: grid;
    grid-template-columns: 114px 116px 102px 50px 96px 34px 90px 38px 90px;
    justify-content: start;
    align-items: center;
    justify-items: center;
    margin-left: 9px;
    border-left: 1px solid #9a9a9a;
}
.tray-ic {
    width: 32px;
    height: 32px;
}
.clock {
    display: flex;
    flex-direction: column;
    align-items: center;
    gap: 9px;
    margin-left: -2px;
    color: #111;
    font: 22.5px/28px "Open Sans", sans-serif;
}
.lang {
    color: #111;
    font-size: 26px;
}
.apps,
.sys-apps {
    display: flex;
}
.app {
    position: relative;
    width: 98.4px;
    height: 80px;
    flex: none;
    display: flex;
    align-items: center;
    justify-content: center;
}
.sys-apps {
    margin-left: 4px;
}
.sys-apps .app {
    width: 96px;
}
.app-ic {
    width: 48px;
    height: 48px;
}
.active {
    background-color: #eff1f3;
    border-bottom: 4px solid #757575;
}
.active-soft::after {
    content: "";
    position: absolute;
    bottom: 0;
    left: 10px;
    width: 80px;
    height: 4px;
    background-color: #757575;
}
.chrome-profile {
    position: absolute;
    left: 20px;
    top: 37px;
    width: 32px;
    height: 32px;
    border-radius: 50%;
    background: linear-gradient(#e3aaa0 0, #c9e0d6 35%, #d9604a 60%, #3d9a87 100%);
}
```
